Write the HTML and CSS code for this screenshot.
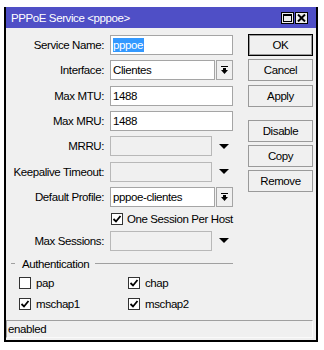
FILE: index.html
```html
<!DOCTYPE html>
<html>
<head>
  <title>PPPoE Service</title>
  <link rel="stylesheet" href="styles.css">
</head>
<body>
  <div class="window">
    <div class="titlebar">
      <span class="title">PPPoE Service &lt;pppoe&gt;</span>
      <div class="title-buttons">
        <span class="tbtn"><span class="max-icon"></span></span>
        <span class="tbtn">
          <svg width="9" height="8" viewBox="0 0 9 8"><path d="M1 0.5 L8 7.5 M8 0.5 L1 7.5" stroke="#000" stroke-width="2"/></svg>
        </span>
      </div>
    </div>

    <div class="content">
      <div class="main">
        <div class="form">
          <label>Service Name:</label>
          <div class="field"><span class="selected">pppoe</span></div>

          <label>Interface:</label>
          <div class="combo">
            <div class="field">Clientes</div>
            <span class="drop-btn">
              <svg width="7" height="8" viewBox="0 0 7 8"><path d="M0 0h7v1H0z M2 2h3v2h2L3.5 8 0 4h2z" fill="#000"/></svg>
            </span>
          </div>

          <label>Max MTU:</label>
          <div class="field">1488</div>

          <label>Max MRU:</label>
          <div class="field">1488</div>

          <label>MRRU:</label>
          <div class="combo">
            <div class="field disabled"></div>
            <span class="drop-arrow"></span>
          </div>

          <label>Keepalive Timeout:</label>
          <div class="combo">
            <div class="field disabled"></div>
            <span class="drop-arrow"></span>
          </div>

          <label>Default Profile:</label>
          <div class="combo">
            <div class="field">pppoe-clientes</div>
            <span class="drop-btn">
              <svg width="7" height="8" viewBox="0 0 7 8"><path d="M0 0h7v1H0z M2 2h3v2h2L3.5 8 0 4h2z" fill="#000"/></svg>
            </span>
          </div>

          <span></span>
          <div class="check">
            <span class="box"><svg width="10" height="10" viewBox="0 0 10 10"><path d="M1.5 5 L4 7.5 L8.5 2" stroke="#000" stroke-width="1.8" fill="none"/></svg></span>
            One Session Per Host
          </div>

          <label>Max Sessions:</label>
          <div class="combo">
            <div class="field disabled"></div>
            <span class="drop-arrow"></span>
          </div>
        </div>

        <div class="buttons">
          <div class="btn default">OK</div>
          <div class="btn">Cancel</div>
          <div class="btn">Apply</div>
          <div class="btn spaced">Disable</div>
          <div class="btn">Copy</div>
          <div class="btn">Remove</div>
        </div>
      </div>

      <div class="auth">
        <div class="legend"><span>Authentication</span></div>
        <div class="checks">
          <div class="check"><span class="box"></span>pap</div>
          <div class="check"><span class="box"><svg width="10" height="10" viewBox="0 0 10 10"><path d="M1.5 5 L4 7.5 L8.5 2" stroke="#000" stroke-width="1.8" fill="none"/></svg></span>chap</div>
          <div class="check"><span class="box"><svg width="10" height="10" viewBox="0 0 10 10"><path d="M1.5 5 L4 7.5 L8.5 2" stroke="#000" stroke-width="1.8" fill="none"/></svg></span>mschap1</div>
          <div class="check"><span class="box"><svg width="10" height="10" viewBox="0 0 10 10"><path d="M1.5 5 L4 7.5 L8.5 2" stroke="#000" stroke-width="1.8" fill="none"/></svg></span>mschap2</div>
        </div>
      </div>

      <div class="status">enabled</div>
    </div>
  </div>
</body>
</html>
```

FILE: styles.css
```css
body {
  margin: 0;
  background-color: #fff;
  font-family: "Liberation Sans", Arial, sans-serif;
  font-size: 11.5px;
  letter-spacing: -0.4px;
  color: #000;
}

.window {
  margin: 7px 0 0 4px;
  width: 314px;
  height: 335px;
  box-sizing: border-box;
  border: 2px solid #000;
  border-top: none;
  background-color: #f0f0f0;
  display: flex;
  flex-direction: column;
}

.titlebar {
  height: 21px;
  flex: none;
  background-color: #4f4fc6;
  color: #fff;
  display: flex;
  align-items: center;
  justify-content: space-between;
  padding: 0 8px 0 5px;
}
.title-buttons {
  display: flex;
  gap: 1px;
  margin-top: 1px;
}
.tbtn {
  width: 13px;
  height: 12px;
  box-sizing: border-box;
  border: 1px solid #000;
  background-color: #ececec;
  display: flex;
  align-items: center;
  justify-content: center;
}
.max-icon {
  width: 9px;
  height: 8px;
  border: 1px solid #000;
  border-top-width: 2px;
  box-sizing: border-box;
}

.content {
  flex: 1;
  display: flex;
  flex-direction: column;
}

.main {
  display: flex;
  padding-top: 6px;
}

.form {
  display: grid;
  grid-template-columns: 98px 123px;
  grid-template-rows: repeat(7, 20px) 13px 20px;
  column-gap: 6px;
  row-gap: 5.33px;
  margin-top: 1px;
  align-items: center;
}
.form label {
  text-align: right;
  white-space: nowrap;
}

.field {
  height: 20px;
  box-sizing: border-box;
  border: 1px solid #a5a5a5;
  background-color: #fff;
  padding: 0 2px;
  line-height: 18px;
  white-space: nowrap;
  overflow: hidden;
}
.field.disabled {
  background-color: #f0f0f0;
  border-color: #b8b8b8;
}
.selected {
  background-color: #3399ff;
  color: #fff;
  display: inline-block;
  line-height: 14px;
  padding-right: 1px;
}

.combo {
  display: flex;
  align-items: center;
}
.combo .field {
  width: 105px;
}
.combo .field.disabled {
  width: 102px;
}
.drop-btn {
  width: 17px;
  height: 20px;
  margin-left: 1px;
  box-sizing: border-box;
  border: 1px solid #a5a5a5;
  background-color: #f0f0f0;
  display: flex;
  align-items: center;
  justify-content: center;
}
.drop-arrow {
  margin-left: 7px;
  width: 0;
  height: 0;
  border-left: 5px solid transparent;
  border-right: 5px solid transparent;
  border-top: 5px solid #000;
}

.check {
  display: flex;
  align-items: center;
  gap: 4px;
  white-space: nowrap;
}
.form .check {
  padding-left: 1px;
}
.box {
  width: 12px;
  height: 12px;
  box-sizing: border-box;
  border: 1px solid #333;
  background-color: #fff;
  display: flex;
  align-items: center;
  justify-content: center;
  flex: none;
}

.buttons {
  margin-left: 15px;
  width: 65px;
  display: flex;
  flex-direction: column;
  gap: 3.3px;
}
.btn {
  height: 22px;
  box-sizing: border-box;
  border: 1px solid #9a9a9a;
  background-color: #f0f0f0;
  display: flex;
  align-items: center;
  justify-content: center;
}
.btn.default {
  border-color: #000;
  box-shadow: inset 0 0 0 1px #9a9a9a;
}
.btn.spaced {
  margin-top: 10px;
}

.auth {
  margin-top: 6px;
}
.legend {
  display: flex;
  align-items: center;
  height: 14px;
  width: 222px;
  padding-left: 5px;
}
.legend::before {
  content: "";
  width: 4px;
  height: 1px;
  background-color: #a0a0a0;
  margin-right: 7px;
}
.legend::after {
  content: "";
  flex: 1;
  height: 1px;
  background-color: #a0a0a0;
  margin-left: 6px;
}
.checks {
  display: grid;
  grid-template-columns: 109px 100px;
  grid-auto-rows: 12px;
  row-gap: 9px;
  padding-left: 13px;
  margin-top: 6px;
}
.checks .check {
  gap: 5px;
}

.status {
  margin: auto 3px 2px 0;
  height: 18px;
  box-sizing: border-box;
  border-top: 1px solid #a0a0a0;
  border-left: 1px solid #a0a0a0;
  border-right: 1px solid #fafafa;
  border-bottom: 1px solid #fafafa;
  padding-left: 1px;
  line-height: 16px;
}
```
